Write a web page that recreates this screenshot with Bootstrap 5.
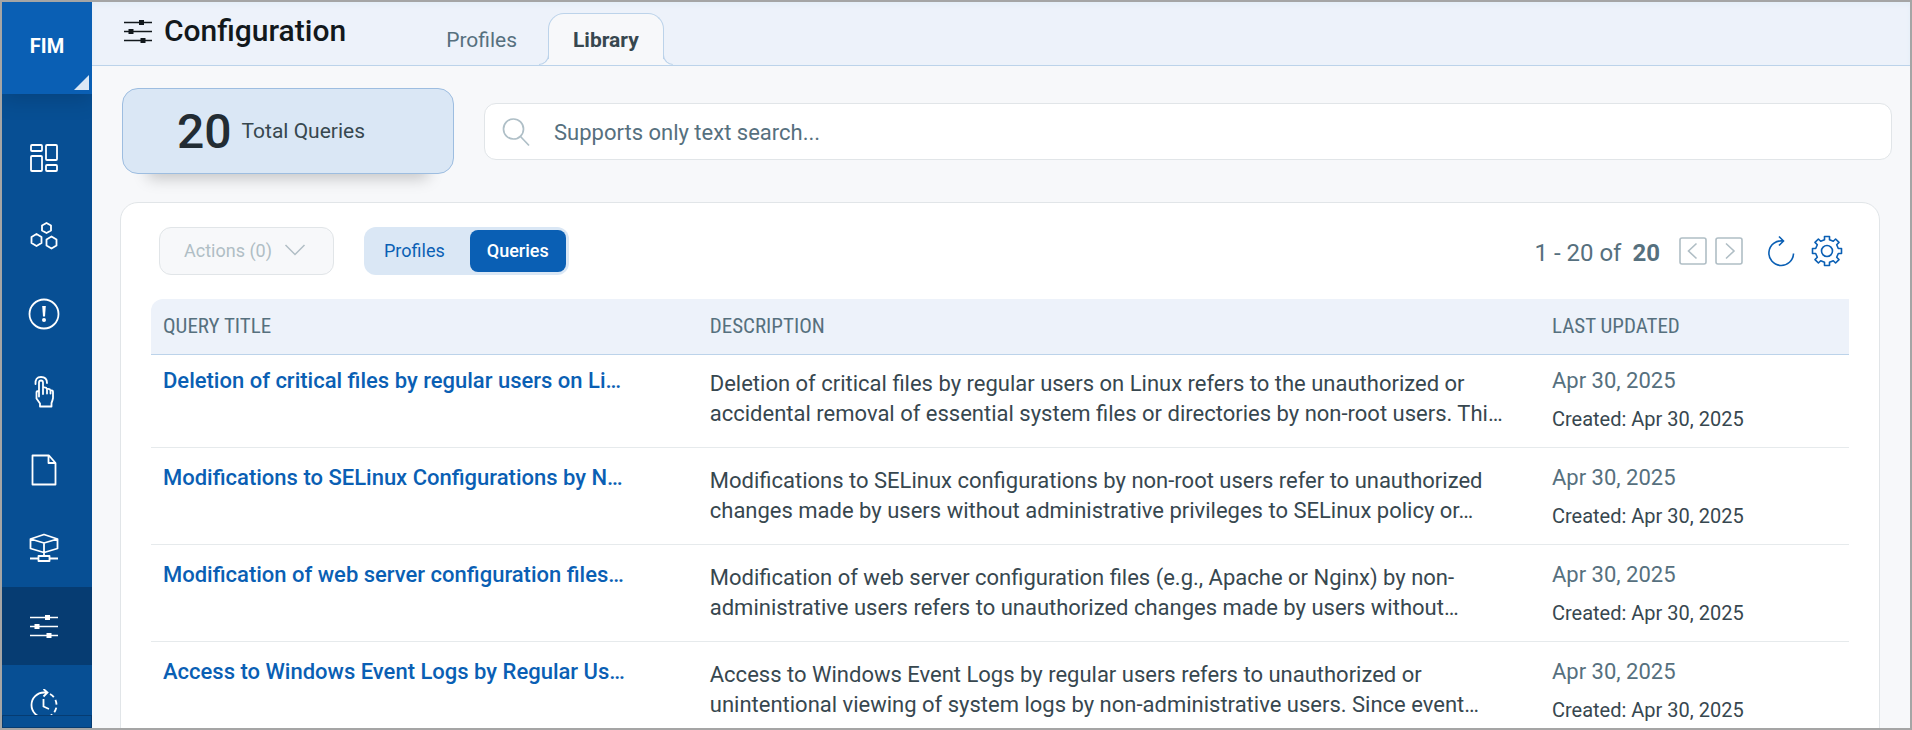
<!DOCTYPE html>
<html lang="en">
<head>
<meta charset="utf-8">
<meta name="viewport" content="width=device-width, initial-scale=1">
<title>FIM - Configuration</title>
<link rel="stylesheet" href="https://cdn.jsdelivr.net/npm/bootstrap@5.3.0/dist/css/bootstrap.min.css">
<style>
:root { --blue: #0a5fb4; --rail: #074f94; --rail-dark: #063c72; --slate: #56707e; --ink: #37474f; --line: #e1e5e8; --tint: #edf2fa; --sky: #dae7f5; --edge: #bcd3ea; --page: #f7f8fa; }
body { font-family: Roboto, "Open Sans", sans-serif; color: var(--ink); background: var(--page); }
svg { display: block; fill: none; stroke: currentColor; }
.app-frame { border: 2px solid #a5a5a5; }

.rail { width: 90px; background: var(--rail); }
.rail-brand { height: 92px; padding-bottom: 4px; background: var(--blue); font-size: 20px; box-shadow: 0 6px 20px rgba(0,0,0,.15); }
.rail-brand::after { content: ""; position: absolute; right: 3px; bottom: 4px; border-left: 15px solid transparent; border-bottom: 15px solid var(--sky); }
.rail-list { padding-top: 25px; min-height: 0; }
.rail-list a { height: 78px; padding-right: 6px; }
.rail-list a.active { background: var(--rail-dark); }
.rail-foot { height: 13px; background: var(--rail); border: 1px solid var(--rail-dark); }

.topbar { height: 64px; background: var(--tint); border-bottom: 1px solid var(--edge); padding-left: 32px; box-shadow: inset 0 3px 4px #e4eef7; }
.topbar h1 { font-size: 30px; font-weight: 500; line-height: 32px; color: #12181c; padding-bottom: 6px; gap: 12px; }
.tabs { margin-left: 73px; font-size: 21px; }
.tabs a { height: 52px; color: var(--slate); padding: 2px 26px 0; border: 1px solid transparent; border-bottom: 0; }
.tabs a.active { position: relative; margin: 0 0 -1px 4px; padding: 2px 24px 0; color: var(--ink); background: var(--page); border-color: var(--edge); border-radius: 16px 16px 0 0; }
.tabs a.active::before, .tabs a.active::after { content: ""; position: absolute; bottom: 0; width: 10px; height: 10px; border: 1px solid var(--edge); border-top: 0; }
.tabs a.active::before { right: 100%; border-left: 0; border-bottom-right-radius: 10px; box-shadow: 4px 4px 0 var(--page); clip-path: inset(0 -1px 0 0); }
.tabs a.active::after { left: 100%; border-right: 0; border-bottom-left-radius: 10px; box-shadow: -4px 4px 0 var(--page); clip-path: inset(0 0 0 -1px); }

.summary { padding: 22px 18px 0 30px; gap: 30px; }
.total { width: 332px; height: 86px; padding: 2px 0 0 54px; gap: 10px; font-size: 21px; background: var(--sky); border: 1px solid #9dbde0; border-radius: 16px; box-shadow: 0 30px 16px -26px rgba(0,0,0,.22); }
.total strong { font-size: 48px; font-weight: 500; line-height: 56px; color: #222c33; }
.search { height: 57px; margin-top: 15px; padding-left: 17px; gap: 24px; background: #fff; border: 1px solid var(--line); border-radius: 12px; color: #afbfc7; }
.search input { padding: 2px 0 0; font-size: 22px; color: var(--slate); outline: 0; }
.search input::placeholder { color: var(--slate); opacity: 1; }

.panel { margin: 28px 30px 0 28px; padding: 24px 30px 0; background: #fff; border: 1px solid var(--line); border-radius: 18px 18px 0 0; }
.tools { height: 48px; font-size: 18px; padding-left: 8px; }
.btn-actions { width: 175px; height: 48px; padding: 0 24px 2px; font-size: 18px; border-radius: 12px; }
.btn-actions:disabled { color: #b0bec5; background: var(--page); border-color: var(--line); opacity: 1; }
.switch { margin-left: 30px; padding: 3px; background: var(--sky); border-radius: 12px; }
.switch button { height: 42px; padding: 0 17px 2px; font-size: 18px; color: var(--blue); border: 0; border-radius: 8px; }
.switch button.active { color: #fff; background: var(--blue); font-weight: 500; }
.switch button:first-child { padding-right: 25px; }
.pager { font-size: 24px; color: var(--slate); padding-right: 6px; }
.pager span, .pager strong { padding-top: 3px; }
.pager strong { margin: 0 19px 0 11px; }
.pager button { padding: 0; border: 0; background: none; }
.step { color: #b0bec5; margin-right: 8px; }
.act { color: var(--blue); }

.queries { table-layout: fixed; margin-top: 24px; font-size: 22px; }
.queries th { height: 55px; padding: 0 12px; font: 400 21px "Roboto Condensed", "Liberation Sans Narrow", Roboto, sans-serif; color: var(--slate); background: var(--tint); border-bottom: 1px solid var(--edge); vertical-align: middle; }
.queries th:first-child { border-top-left-radius: 12px; }
.queries td { height: 97px; padding: 15px 12px 0; line-height: 30px; vertical-align: top; border-bottom: 1px solid #e6eaec; }
.queries td.about { padding-top: 18px; }
.queries tr:first-child td { height: 93px; padding-top: 11px; }
.queries tr:first-child td.about { padding-top: 14px; }
.col-title { width: 32.2%; }
.col-desc { width: 49.6%; }
.queries td a { color: var(--blue); font-weight: 500; }
.updated { color: var(--slate); }
.created { font-size: 20px; margin-top: 8px; }
</style>
</head>
<body>
<svg class="d-none" aria-hidden="true">
  <symbol id="sliders" viewBox="0 0 28 24"><path d="M0 3.5h28M0 12.5h28M0 21.5h28" stroke-width="1.6"/><path d="M15 1h5v5h-5zM4.5 10h5v5h-5zM16.500 19h5v5h-5z" fill="currentColor" stroke="none"/></symbol>
</svg>
<div class="app-frame vh-100 d-flex overflow-hidden">
  <nav class="rail d-flex flex-column flex-shrink-0 overflow-hidden text-white" aria-label="Main">
    <a href="#" class="rail-brand position-relative flex-shrink-0 d-flex align-items-center justify-content-center text-white text-decoration-none fw-bold">FIM</a>
    <ul class="rail-list list-unstyled mb-0 flex-fill overflow-hidden">
      <li><a href="#" aria-label="Dashboard" class="d-flex align-items-center justify-content-center text-white"><svg width="28" height="28" stroke-width="1.8"><rect x="1" y="1" width="11" height="6" rx="1"/><rect x="16" y="1" width="11" height="15" rx="1"/><rect x="1" y="12" width="11" height="15" rx="1"/><rect x="16" y="21" width="11" height="6" rx="1"/></svg></a></li>
      <li><a href="#" aria-label="Assets" class="d-flex align-items-center justify-content-center text-white"><svg width="28" height="28" stroke-width="1.8" stroke-linejoin="round"><path d="M16.500 1l4.500 2.500v5L16.500 11 12 8.500v-5zM6.500 12l5 3v6l-5 3-5-3v-6zM21.500 14.500l5 3v6l-5 3-5-3v-6z"/></svg></a></li>
      <li><a href="#" aria-label="Incidents" class="d-flex align-items-center justify-content-center text-white"><svg width="32" height="32" stroke-width="1.8"><circle cx="16" cy="16" r="14.500"/><path d="M14.200 8h3.600l-.8 10.500h-2z" fill="currentColor" stroke="none"/><circle cx="16" cy="22" r="2" fill="currentColor" stroke="none"/></svg></a></li>
      <li><a href="#" aria-label="Events" class="d-flex align-items-center justify-content-center text-white"><svg width="24" height="32" stroke-width="1.8" stroke-linejoin="round" stroke-linecap="round"><path d="M7 20.500V6.500q0-2 2-2t2 2V18M11 11.500q3.500-.5 4 1.500v4.500M15 13q3-.5 3.500 1.500v3M18.500 14.500q2.500-.5 2.500 1.500v6q-.5 3-1.500 5v3.500H8V27.500l-3.500-5V16.500q0-1.500 2.500-1.500"/><path d="M3.500 8q-.5-7 5.500-7t6 6"/></svg></a></li>
      <li><a href="#" aria-label="Reports" class="d-flex align-items-center justify-content-center text-white"><svg width="26" height="32" stroke-width="1.8" stroke-linejoin="round"><path d="M1.500 1.500H18l6.500 7.500v21.500h-23zM17.500 1.500V9H25"/></svg></a></li>
      <li><a href="#" aria-label="Network" class="d-flex align-items-center justify-content-center text-white"><svg width="30" height="30" stroke-width="1.8" stroke-linejoin="round"><path d="M15 1.500L28.500 6v9.500L15 19.500 1.500 15.500V6zM1.500 6L15 10 28.500 6M15 10v13M1 25.500h8M21 25.500h8M9.500 23h11v5h-11z"/></svg></a></li>
      <li><a href="#" aria-label="Configuration" aria-current="page" class="active d-flex align-items-center justify-content-center text-white"><svg width="28" height="24"><use href="#sliders"/></svg></a></li>
      <li><a href="#" aria-label="History" class="d-flex align-items-center justify-content-center text-white"><svg width="28" height="30" stroke-width="1.8"><path d="M14 28.500A12.500 12.500 0 0 1 14 3.500h3M13.500 0L17.500 3.500 13.500 7.500"/><path d="M20 5a12.500 12.500 0 0 1-6 23.500" stroke-dasharray="5 3"/><path d="M13.500 10v7.500l5.500 2.500"/></svg></a></li>
    </ul>
    <div class="rail-foot flex-shrink-0"></div>
  </nav>

  <main class="flex-fill overflow-hidden">
    <header class="topbar d-flex align-items-end">
      <h1 class="d-flex align-items-center h-100 mb-0"><svg width="28" height="24"><use href="#sliders"/></svg>Configuration</h1>
      <nav class="tabs d-flex" aria-label="Sections">
        <a href="#" class="d-flex align-items-center text-decoration-none">Profiles</a>
        <a href="#" class="active d-flex align-items-center text-decoration-none fw-bold" aria-current="page">Library</a>
      </nav>
    </header>

    <section class="summary d-flex align-items-start">
      <div class="total d-flex align-items-center flex-shrink-0"><strong>20</strong><span>Total Queries</span></div>
      <label class="search d-flex align-items-center flex-fill">
        <svg width="28" height="30" stroke-width="1.7"><circle cx="11.500" cy="12" r="10"/><path d="M18.500 19.500l8.500 9"/></svg>
        <input type="text" class="flex-fill border-0 bg-transparent" placeholder="Supports only text search..." aria-label="Search queries">
      </label>
    </section>

    <section class="panel">
      <div class="tools d-flex align-items-center">
        <button type="button" class="btn btn-actions d-flex align-items-center gap-2" disabled>Actions (0)<svg class="ms-1" width="22" height="12" stroke-width="1.5"><path d="M1.500 1L11 10.500 20.500 1"/></svg></button>
        <div class="switch d-flex" role="group" aria-label="View">
          <button type="button" class="bg-transparent">Profiles</button>
          <button type="button" class="active">Queries</button>
        </div>
        <div class="pager d-flex align-items-center ms-auto">
          <span>1 - 20 of</span><strong>20</strong>
          <button type="button" class="step" aria-label="Previous page"><svg width="28" height="28" stroke-width="1.6"><rect x="1" y="1" width="26" height="26" rx="2"/><path d="M17.500 6.500L9.500 14l8 7.500"/></svg></button>
          <button type="button" class="step" aria-label="Next page"><svg width="28" height="28" stroke-width="1.6"><rect x="1" y="1" width="26" height="26" rx="2"/><path d="M11 6.500l8 7.500-8 7.500"/></svg></button>
          <button type="button" class="act ms-3" aria-label="Refresh"><svg width="28" height="32" stroke-width="1.6"><path d="M26.500 18.500A12.300 12.300 0 1 1 16 6M12 1.500L16.500 6 12 10.500"/></svg></button>
          <button type="button" class="act ms-3" aria-label="Settings"><svg width="32" height="32" viewBox="-16 -16 32 32" stroke-width="1.6" stroke-linejoin="round"><circle r="5.500"/><path d="M-2.500-14.500h5v3.200l3.800 1.600 2.300-2.300 3.400 3.400-2.300 2.300 1.600 3.800h3.200v5h-3.200l-1.600 3.800 2.300 2.300-3.400 3.400-2.300-2.300-3.800 1.600v3.200h-5v-3.200l-3.800-1.600-2.300 2.300-3.400-3.400 2.300-2.300-1.600-3.800h-3.200v-5h3.200l1.600-3.800-2.300-2.300 3.400-3.400 2.300 2.300 3.800-1.600z"/></svg></button>
        </div>
      </div>
      <table class="queries w-100">
        <colgroup><col class="col-title"><col class="col-desc"><col></colgroup>
        <thead><tr><th scope="col">QUERY TITLE</th><th scope="col">DESCRIPTION</th><th scope="col">LAST UPDATED</th></tr></thead>
        <tbody>
          <tr>
            <td><a href="#" class="text-decoration-none d-block text-truncate">Deletion of critical files by regular users on Li…</a></td>
            <td class="about">Deletion of critical files by regular users on Linux refers to the unauthorized or accidental removal of essential system files or directories by non-root users. Thi…</td>
            <td><div class="updated">Apr 30, 2025</div><div class="created">Created: Apr 30, 2025</div></td>
          </tr>
          <tr>
            <td><a href="#" class="text-decoration-none d-block text-truncate">Modifications to SELinux Configurations by N…</a></td>
            <td class="about">Modifications to SELinux configurations by non-root users refer to unauthorized changes made by users without administrative privileges to SELinux policy or…</td>
            <td><div class="updated">Apr 30, 2025</div><div class="created">Created: Apr 30, 2025</div></td>
          </tr>
          <tr>
            <td><a href="#" class="text-decoration-none d-block text-truncate">Modification of web server configuration files…</a></td>
            <td class="about">Modification of web server configuration files (e.g., Apache or Nginx) by non-administrative users refers to unauthorized changes made by users without…</td>
            <td><div class="updated">Apr 30, 2025</div><div class="created">Created: Apr 30, 2025</div></td>
          </tr>
          <tr>
            <td><a href="#" class="text-decoration-none d-block text-truncate">Access to Windows Event Logs by Regular Us…</a></td>
            <td class="about">Access to Windows Event Logs by regular users refers to unauthorized or unintentional viewing of system logs by non-administrative users. Since event…</td>
            <td><div class="updated">Apr 30, 2025</div><div class="created">Created: Apr 30, 2025</div></td>
          </tr>
        </tbody>
      </table>
    </section>
  </main>
</div>
<script src="https://cdn.jsdelivr.net/npm/bootstrap@5.3.0/dist/js/bootstrap.bundle.min.js"></script>
</body>
</html>
